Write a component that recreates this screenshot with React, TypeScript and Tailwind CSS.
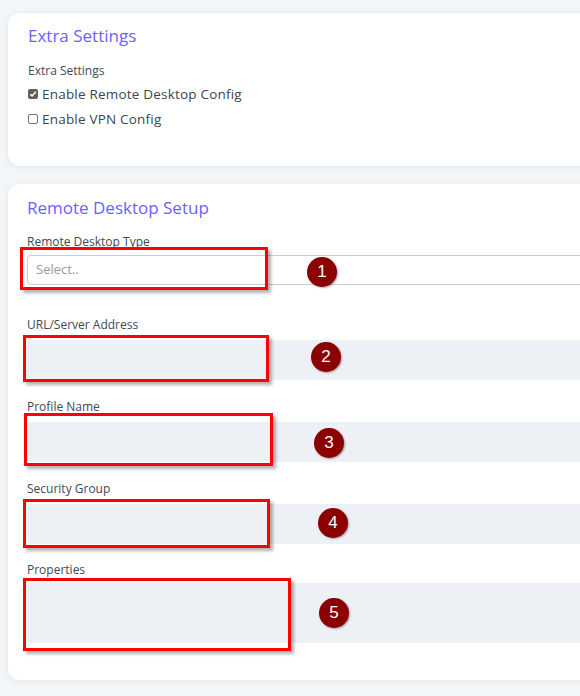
import React from "react";

const font = { fontFamily: '"Open Sans", "Noto Sans", sans-serif' };

function RedBox({ l, t, w, h }: { l: number; t: number; w: number; h: number }) {
  return (
    <div
      className="absolute border-[3px] border-[#ff0000] shadow-[3px_3px_3px_rgba(0,0,0,0.3)] pointer-events-none"
      style={{ left: l, top: t, width: w, height: h }}
    />
  );
}

function Badge({ x, y, n }: { x: number; y: number; n: number }) {
  return (
    <div
      className="absolute w-[30px] h-[30px] rounded-full bg-[#8b0000] text-white flex items-center justify-center text-[17px] shadow-[1px_1px_2px_rgba(0,0,0,0.35)]"
      style={{ left: x - 15, top: y - 15, fontFamily: '"Liberation Sans", Arial, sans-serif' }}
    >
      {n}
    </div>
  );
}

function Label({ children }: { children: React.ReactNode }) {
  return <div className="text-[12px] leading-[16px] text-[#3f4857]">{children}</div>;
}

function Field({ label, gap, children }: { label: string; gap: string; children: React.ReactNode }) {
  return (
    <div className={`flex flex-col ${gap}`}>
      <Label>{label}</Label>
      {children}
    </div>
  );
}

function Check({ checked, label }: { checked: boolean; label: string }) {
  return (
    <div className="flex items-center h-5 gap-[4px] text-[13.5px] tracking-[0.2px] text-[#3a4453]">
      {checked ? (
        <span className="w-[10px] h-[10px] rounded-[2px] bg-[#5f5f5f] flex items-center justify-center">
          <svg width="8" height="8" viewBox="0 0 8 8">
            <path d="M1.3 4.2 L3.1 6 L6.8 1.8" stroke="white" strokeWidth="1.5" fill="none" />
          </svg>
        </span>
      ) : (
        <span className="w-[10px] h-[10px] rounded-[2px] border border-[#767676] bg-white" />
      )}
      {label}
    </div>
  );
}

export default function App() {
  return (
    <div className="relative w-[580px] h-[696px] overflow-hidden bg-[#f4f7fa]" style={font}>
      <div className="pl-2 pt-[13px] flex flex-col gap-[18px]">
        {/* Card 1 */}
        <div className="w-[620px] h-[153px] bg-white rounded-[12px] shadow-[0_1px_6px_rgba(30,41,59,0.1)] pl-5 pt-[11px] flex flex-col">
          <div className="text-[17px] leading-[24px] text-[#6c5ffb]">Extra Settings</div>
          <div className="mt-[15px] flex flex-col gap-[5px]">
            <Label>Extra Settings</Label>
            <Check checked label="Enable Remote Desktop Config" />
            <Check checked={false} label="Enable VPN Config" />
          </div>
        </div>

        {/* Card 2 */}
        <div className="w-[620px] h-[496px] bg-white rounded-[12px] shadow-[0_1px_6px_rgba(30,41,59,0.1)] pl-[19px] pt-[12px] flex flex-col">
          <div className="text-[17px] leading-[24px] text-[#6c5ffb]">Remote Desktop Setup</div>
          <div className="mt-[14px] flex flex-col">
            <Field label="Remote Desktop Type" gap="gap-[5px]">
              <div className="h-[30px] border border-[#cccccc] rounded-[4px] flex items-center pl-[8px] text-[13px] text-[#9a9a9a]">
                Select..
              </div>
            </Field>
            <div className="mt-[32px] flex flex-col gap-[19px]">
              <Field label="URL/Server Address" gap="gap-[7px]">
                <div className="h-[40px] bg-[#edf1f5] rounded-l-[3px]" />
              </Field>
              <Field label="Profile Name" gap="gap-[7px]">
                <div className="h-[40px] bg-[#edf1f5] rounded-l-[3px]" />
              </Field>
              <Field label="Security Group" gap="gap-[7px]">
                <div className="h-[40px] bg-[#edf1f5] rounded-l-[3px]" />
              </Field>
            </div>
            <div className="mt-[18px]">
              <Field label="Properties" gap="gap-[5px]">
                <div className="h-[60px] bg-[#edf1f5] rounded-l-[3px]" />
              </Field>
            </div>
          </div>
        </div>
      </div>

      <RedBox l={20} t={247} w={248} h={43} />
      <RedBox l={23} t={335} w={246} h={47} />
      <RedBox l={24} t={413} w={249} h={53} />
      <RedBox l={23} t={499} w={247} h={49} />
      <RedBox l={23} t={578} w={268} h={73} />

      <Badge x={322} y={272} n={1} />
      <Badge x={326} y={357} n={2} />
      <Badge x={329} y={443} n={3} />
      <Badge x={333} y={523} n={4} />
      <Badge x={334} y={613} n={5} />
    </div>
  );
}
